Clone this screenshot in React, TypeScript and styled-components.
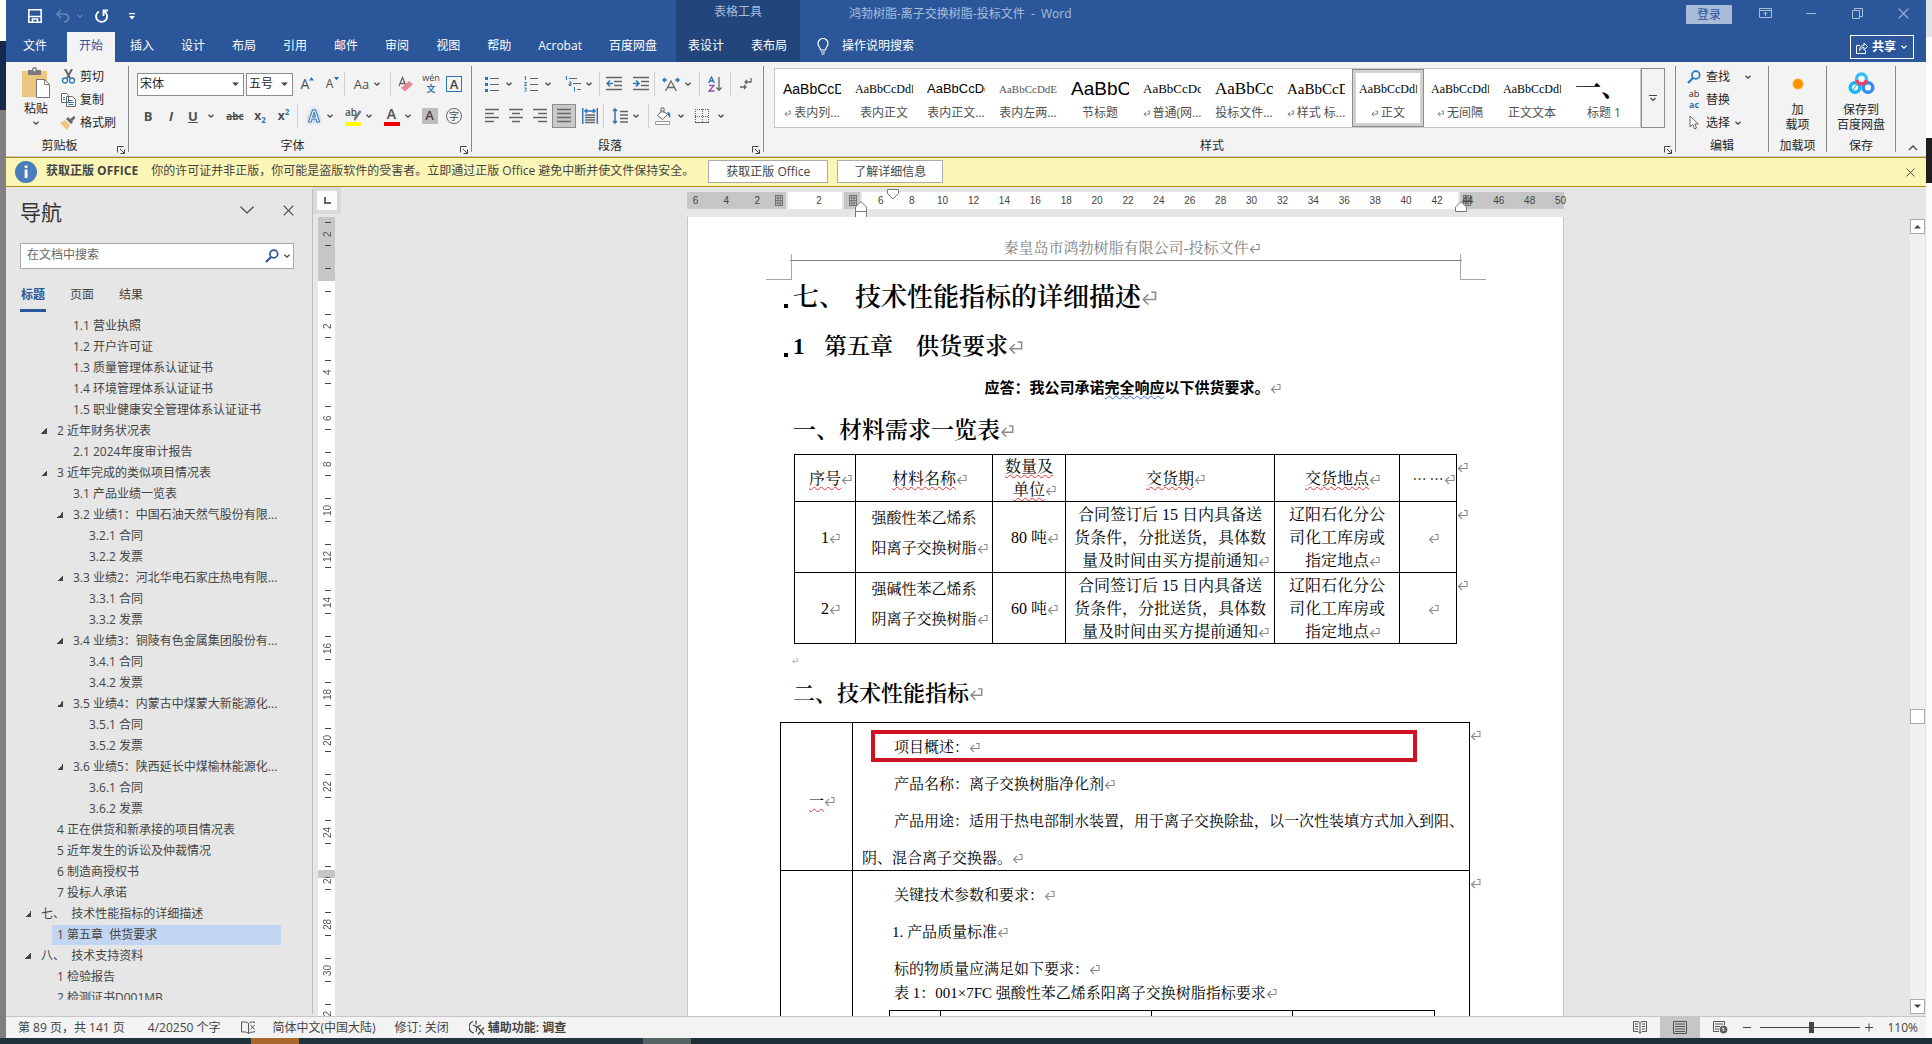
import React from 'react';
import styled, { createGlobalStyle, css } from 'styled-components';

const ui = `"Open Sans", "Noto Sans CJK SC", sans-serif`;
const song = `"Liberation Serif", "Noto Serif CJK SC", "Noto Sans CJK SC", serif`;
const arial = `"Liberation Sans", "Noto Sans CJK SC", sans-serif`;

const Global = createGlobalStyle`
  * { box-sizing: border-box; }
  body { margin: 0; font-family: ${ui}; font-size: 12px; line-height: 16px; color: #444; overflow: hidden; }
  button, input, select { font: inherit; color: inherit; margin: 0; }
  button { background: none; border: 0; padding: 0; cursor: pointer; white-space: nowrap; }
  svg { display: block; flex: none; }
  p, h1, h2, h3 { margin: 0; }
`;

/* ---------- frame ---------- */
const Desktop = styled.div`display: flex; flex-direction: column; height: 100vh; background: #fdfdfd;`;
const DesktopRow = styled.div`flex: 1; min-height: 0; display: flex;`;
const LeftStrip = styled.div`
  width: 6px; flex: none;
  background: linear-gradient(#fff 41px, #16294c 41px, #16294c 110px, #808080 110px);
`;
const RightStrip = styled.div`
  width: 6px; flex: none;
  background: linear-gradient(#dfe3ea 37px, #fdfdfd 37px, #fdfdfd 138px, #1e1e1e 138px, #1e1e1e 183px, #fbfbfb 183px);
`;
const Taskbar = styled.div`
  height: 6px; flex: none;
  background: linear-gradient(90deg, #22323a 251px, #a9682f 251px, #a9682f 299px, #22343c 299px, #22343c 643px, #566466 643px, #566466 691px, #1f2f38 691px);
`;
const Win = styled.div`flex: 1; min-width: 0; display: flex; flex-direction: column; background: #e6e6e6;`;

/* ---------- title area ---------- */
const Head = styled.header`display: flex; height: 62px; flex: none; background: #2b579a; color: #fff;`;
const HeadCol = styled.div<{ $grow?: boolean }>`
  display: flex; flex-direction: column;
  ${p => p.$grow && css`flex: 1; min-width: 0;`}
`;
const TitleRow = styled.div<{ $pad?: number }>`display: flex; align-items: center; height: 32px; padding-left: ${p => p.$pad ?? 0}px;`;
const TabRow = styled.nav<{ $pad?: number }>`display: flex; gap: 3px; height: 30px; padding: 0 ${p => p.$pad ?? 5}px;`;
const Tab = styled.button<{ $on?: boolean; $file?: boolean }>`
  height: 30px; padding: 0 12px 2px;
  ${p => p.$on && css`background: #f3f3f3; color: #2b579a;`}
  ${p => p.$file && css`margin-right: 5px;`}
`;
const QatButton = styled.button<{ $w: number }>`width: ${p => p.$w}px; height: 24px; display: flex; align-items: center; justify-content: center; gap: 6px;`;
const Context = styled.div`width: 124px; flex: none; margin-left: 2px; background: #22457c;`;
const ContextName = styled.div`height: 32px; padding: 4px 0; text-align: center; color: #a9bddb;`;
const DocTitle = styled.div`flex: 1; padding-bottom: 4px; color: #a9bddb; white-space: pre; overflow: hidden;`;
const SignIn = styled.button`width: 46px; height: 19px; margin: 0 10px 3px 0; border-radius: 1px; background: #a9bcd9; color: #2b579a;`;
const WinButton = styled.button`width: 46px; height: 26px; padding-bottom: 6px; display: flex; align-items: center; justify-content: center;`;
const Tell = styled.button`display: flex; align-items: center; gap: 13px; padding: 0 0 2px 9px;`;
const Share = styled.button`
  display: flex; align-items: center; justify-content: center; gap: 4px; width: 64px; height: 24px; margin: 3px 4px 0 auto;
  border: 1px solid #fff; font-weight: 600;
`;

/* ---------- ribbon ---------- */
const Ribbon = styled.div`display: flex; height: 95px; flex: none; background: #f3f3f3; border-bottom: 1px solid #c8c6c4; color: #262626;`;
const Group = styled.section<{ $w?: number }>`
  ${p => (p.$w ? css`width: ${p.$w}px; flex: none;` : css`flex: 1; min-width: 0;`)}
  display: flex; flex-direction: column; position: relative;
  &::after { content: ''; position: absolute; right: 0; top: 4px; bottom: 4px; width: 1px; background: #8a8a8a; }
`;
const GroupBody = styled.div<{ $pad: string; $col?: boolean }>`
  flex: 1; display: flex; padding: ${p => p.$pad};
  ${p => p.$col && css`flex-direction: column; gap: 10px;`}
`;
const Caption = styled.div`display: flex; align-items: center; height: 20px; padding-right: 1px;`;
const CaptionText = styled.span`flex: 1; text-align: center;`;
const Launcher = styled.button`width: 15px; height: 12px; display: flex; justify-content: center; align-items: end; align-self: end; padding-bottom: 2px;`;
const ToolRow = styled.div`display: flex; align-items: center; height: 22px; color: #444;`;
const Tool = styled.button<{ $w: number; $gap?: number; $on?: boolean }>`
  width: ${p => p.$w}px; height: 24px; flex: none; display: flex; align-items: center; justify-content: center; gap: ${p => p.$gap ?? 4}px;
  ${p => p.$on && css`background: #c8c8c8; border: 1px solid #8c8c8c;`}
`;
const Sep = styled.i`width: 1px; height: 24px; flex: none; background: #cfcfcf;`;
const Glyph = styled.span<{ $s?: number; $b?: boolean; $i?: boolean; $u?: boolean; $c?: string; $line?: boolean }>`
  font-size: ${p => p.$s ?? 14}px; line-height: 16px; min-width: 8px; text-align: center;
  font-weight: ${p => (p.$b ? 700 : 400)}; font-style: ${p => (p.$i ? 'italic' : 'normal')};
  text-decoration: ${p => (p.$u ? 'underline' : p.$line ? 'line-through' : 'none')}; color: ${p => p.$c ?? '#505050'};
  sub, sup { font-size: 8px; line-height: 8px; color: #2e75b5; }
`;
const Framed = styled.span<{ $kind: 'box' | 'fill' | 'circle' }>`
  width: 16px; height: 16px; font-size: ${p => (p.$kind === 'circle' ? 10 : 13)}px; line-height: 14px; text-align: center; color: #444; font-weight: 600;
  ${p => p.$kind === 'box' && css`border: 1px solid #2e75b5;`}
  ${p => p.$kind === 'fill' && css`background: #bdbdbd;`}
  ${p => p.$kind === 'circle' && css`border: 1px solid #666; border-radius: 50%; font-weight: 400;`}
`;
const GlowA = styled.span`width: 16px; font-size: 16px; line-height: 18px; font-weight: 700; text-align: center; color: #fff; -webkit-text-stroke: 1px #3b7ab8; filter: drop-shadow(0 0 2px #8fbce6);`;
const ColorMark = styled.span<{ $c: string }>`width: 16px; height: 20px; font-size: 14px; line-height: 15px; font-weight: 600; text-align: center; color: #505050; border-bottom: 4px solid ${p => p.$c};`;
const SmallAb = styled(ColorMark)`font-size: 10px; line-height: 12px; text-align: left; display: flex; svg { margin-left: -3px; }`;
const Pinyin = styled.span`display: flex; flex-direction: column; align-items: center; font-size: 9px; line-height: 10px; span { color: #2e75b5; font-size: 9px; line-height: 12px; font-weight: 700; }`;
const Combo = styled.span<{ $w: number }>`
  width: ${p => p.$w}px; height: 23px; margin-right: 2px; flex: none; display: flex; align-items: center; background: #fff; border: 1px solid #8d8d8d; padding-right: 4px;
  select { flex: 1; min-width: 0; appearance: none; border: 0; background: none; padding: 0 0 0 2px; color: #262626; outline: 0; }
`;
const Big = styled.button<{ $w: number }>`width: ${p => p.$w}px; display: flex; flex-direction: column; align-items: center; line-height: 15px; color: #262626; white-space: pre-line;`;
const BigIcon = styled.span<{ $h: number }>`height: ${p => p.$h}px; display: flex; align-items: center;`;
const List = styled.div`display: flex; flex-direction: column;`;
const ListTool = styled.button`height: 23px; display: flex; align-items: center; gap: 4px; color: #262626;`;
const ListIcon = styled.span`width: 16px; display: flex; justify-content: center;`;
const Far = styled.span`padding-left: 10px;`;

const Gallery = styled.div`flex: 1; min-width: 0; height: 60px; display: flex; background: #fff; border: 1px solid #c8c8c8; padding-left: 1px; overflow: hidden;`;
const StyleCard = styled.button<{ $on?: boolean }>`
  width: 72px; height: 58px; flex: none; display: flex; flex-direction: column; align-items: center; padding-top: 8px;
  ${p => p.$on && css`box-shadow: inset 0 0 0 1px #8c8c8c, inset 0 0 0 4px #d0d0cd;`}
`;
const Sample = styled.span<{ $f: string; $s: number; $c?: string; $b?: boolean }>`
  width: 58px; height: 26px; line-height: 24px; overflow: hidden; text-align: left;
  font-family: ${p => p.$f}; font-size: ${p => p.$s}px; color: ${p => p.$c ?? '#000'}; font-weight: ${p => (p.$b ? 700 : 400)};
`;
const StyleName = styled.span`display: flex; align-items: center; gap: 3px; margin-top: 2px; color: #505050; white-space: pre;`;
const More = styled.button`width: 24px; height: 60px; border: 1px solid #8c8c8c; display: flex; align-items: center; justify-content: center; flex: none;`;
const Collapse = styled.button`flex: none; width: 30px; display: flex; align-items: end; justify-content: center; padding: 0 0 4px 3px;`;

/* ---------- licence bar ---------- */
const Notice = styled.div`
  display: flex; align-items: center; height: 30px; flex: none; padding: 0 11px 0 9px; background: #fcf6b6; white-space: nowrap;
  border-top: 1px solid #b28b0a; border-bottom: 1px solid #b28b0a; color: #444;
`;
const NoticeTitle = styled.strong`margin: 0 13px 0 9px; padding-bottom: 2px;`;
const NoticeText = styled.span`padding-bottom: 2px; margin-right: 14px;`;
const NoticeButton = styled.button<{ $w: number }>`width: ${p => p.$w}px; height: 23px; margin: 0 9px 1px 0; background: #fff; border: 1px solid #ababab;`;
const Push = styled.span`flex: 1;`;

/* ---------- navigation ---------- */
const Body = styled.div`flex: 1; min-height: 0; display: flex;`;
const Nav = styled.aside`width: 307px; flex: none; display: flex; flex-direction: column; border-right: 1px solid #bdbdbd; margin: 2px 0; padding-bottom: 14px;`;
const NavHead = styled.div`display: flex; align-items: center; height: 54px; padding: 0 18px 12px 14px; gap: 29px; h2 { flex: 1; font-weight: 400; font-size: 21px; line-height: 28px; padding-top: 4px; color: #333; }`;
const SearchBox = styled.label`
  display: flex; align-items: center; gap: 4px; height: 26px; margin: 0 18px 0 14px; padding: 0 2px 0 6px; background: #fff; border: 1px solid #ababab;
  input { flex: 1; min-width: 0; border: 0; outline: 0; padding: 0 0 2px; background: none; } input::placeholder { color: #666; opacity: 1; }
`;
const NavTabs = styled.div`display: flex; gap: 23px; padding: 14px 14px 4px;`;
const NavTab = styled.button<{ $on?: boolean }>`
  width: 26px; height: 29px; padding-bottom: 5px; ${p => p.$on && css`color: #2b579a; font-weight: 700; border-bottom: 3px solid #2b579a; padding-bottom: 2px;`}
`;
const Tree = styled.div`flex: 1; min-height: 0; overflow: hidden; padding-right: 31px;`;
const Node = styled.a<{ $lvl: number; $on?: boolean }>`
  display: flex; align-items: center; gap: 10px; height: 20px; margin: 0 0 1px ${p => p.$lvl * 16 + 14}px;
  color: #444; text-decoration: none; white-space: pre; overflow: hidden;
  ${p => p.$on && css`background: linear-gradient(90deg, transparent 16px, #c2d5f2 16px);`}
`;
const Arrow = styled.span<{ $show?: boolean }>`width: 6px; height: 6px; flex: none; margin-left: 5px; ${p => p.$show && css`background: linear-gradient(135deg, transparent 50%, #444 50%);`}`;

/* ---------- rulers and page ---------- */
const RulerCol = styled.div`width: 28px; flex: none; display: flex; flex-direction: column; align-items: center;`;
const TabStop = styled.button`width: 28px; height: 27px; flex: none; margin-bottom: 3px; border: 4px solid #d9d9d9; background: #fbfbfb; display: flex; align-items: center; justify-content: center;`;
const VRuler = styled.div`
  width: 17px; flex: 1; min-height: 0; overflow: hidden; margin-right: 1px; color: #555; font: 10px/12px ${arial};
  background: linear-gradient(#c6c6c6 64px, #fff 64px);
`;
const VUnits = styled.div`margin-top: -6px;`;
const VUnit = styled.div<{ $cover?: boolean }>`
  height: 46px; display: flex; flex-direction: column; align-items: center; justify-content: space-between; padding: 11px 0;
  &::before, &::after { content: ''; width: 6px; height: 1px; background: #444; margin-left: 3px; }
  ${p => p.$cover && css`background: linear-gradient(transparent 15px, #c6c6c6 15px, #c6c6c6 23px, transparent 23px); span { clip-path: inset(0 0 6px 0); }`}
  span { writing-mode: vertical-rl; transform: rotate(180deg); height: 14px; text-align: center; margin-left: 2px; }
`;
const Canvas = styled.main`flex: 1; min-width: 0; display: flex; flex-direction: column; align-items: center; overflow: hidden;`;
const HRuler = styled.div`width: 877px; height: 30px; flex: none; display: grid; padding: 5px 0 9px; position: relative;`;
const Segments = styled.div`grid-area: 1 / 1; display: flex; gap: 2px;`;
const Seg = styled.i<{ $w?: number; $dark?: boolean }>`${p => (p.$w ? css`width: ${p.$w}px;` : css`flex: 1;`)} background: ${p => (p.$dark ? '#c6c6c6' : '#fff')}; display: flex; align-items: center; justify-content: ${p => (p.$w === 104 ? 'start' : 'end')}; padding: 0 3px;`;
const Numbers = styled.div`grid-area: 1 / 1; display: grid; grid-template-columns: repeat(29, 1fr); margin: 0 -12px 0 -7px; text-align: center; font: 10px/17px ${arial}; color: #444;`;
const Marker = styled.span<{ $x: number; $y: number }>`position: absolute; left: ${p => p.$x}px; top: ${p => p.$y}px;`;
const Page = styled.article`
  width: 877px; flex: 1; min-height: 0; overflow: hidden; position: relative; background: #fff; border: solid #c6c6c6; border-width: 0 1px;
  padding: 20px 101px 0 102px; color: #000; font-family: ${song}; font-size: 15px;
`;
const PageHeader = styled.div`text-align: center; line-height: 23px; border-bottom: 1px solid #808080; color: #7f7f7f;`;
const Corner = styled.i<{ $right?: boolean }>`
  position: absolute; top: 37px; width: 26px; height: 26px; border-bottom: 1px solid #a6a6a6;
  ${p => (p.$right ? css`right: 77px; border-left: 1px solid #a6a6a6;` : css`left: 78px; border-right: 1px solid #a6a6a6;`)}
`;
const Heading = styled.h2<{ $s: number; $top: number }>`
  display: flex; align-items: center; font-size: ${p => p.$s}px; line-height: 40px; margin-top: ${p => p.$top}px; padding-left: 3px; font-weight: 600; white-space: pre;
`;
const Dot = styled.i`width: 4px; height: 4px; background: #000; margin: 15px 5px 0 -9px;`;
const HeadNum = styled.span<{ $w: number }>`width: ${p => p.$w}px;`;
const Answer = styled.p`line-height: 24px; margin-top: 9px; padding-left: 2px; text-align: center; font-family: ${arial}; font-weight: 700;`;
const Wave = styled.span<{ $c?: string }>`text-decoration: underline wavy ${p => p.$c ?? '#e33'} 1px; text-underline-offset: 2px; text-decoration-skip-ink: none;`;
const Mark = styled.svg<{ $s: number }>`display: inline-block; vertical-align: -1px; margin-right: -${p => p.$s}px;`;
const NameMark = styled.svg``;
const ReqTable = styled.table`
  margin: 3px 0 0 4px; width: 682px; table-layout: fixed; border-collapse: collapse; font-size: 16px; line-height: 23px;
  th, td { border: 1px solid #000; padding: 0; text-align: center; font-weight: 400; white-space: nowrap; }
  tr { height: 71px; } thead tr { height: 47px; }
`;
const NameCell = styled.td`font-size: 15px; line-height: 30px; && { padding-bottom: 9px; }`;
const Dots = styled.th`font-family: "Noto Sans CJK SC", sans-serif; font-size: 14px;`;
const RowEnd = styled.td`&&& { border: 0; text-align: left; vertical-align: top; padding: 0; }`;
const Blank = styled.p`height: 12px; margin: 11px 0 0 2px; display: flex; align-items: center;`;
const SpecTable = styled.table`
  margin: 8px 0 0 -10px; width: 709px; table-layout: fixed; border-collapse: collapse; line-height: 24px;
  > tbody > tr > td { border: 1px solid #000; padding: 0; text-align: center; position: relative; }
`;
const SpecIndex = styled.td`&& { padding-top: 8px; }`;
const SpecBody = styled.td`&& { text-align: left; vertical-align: top; padding: 12px 0 0 8px; white-space: nowrap; }`;
const Line = styled.p<{ $in?: number; $tight?: boolean }>`padding-left: ${p => p.$in ?? 33}px; margin-bottom: ${p => (p.$tight ? 0 : 13)}px; &:last-child { margin-bottom: 0; }`;
const RedBox = styled.span`position: absolute; left: 18px; top: 7px; width: 546px; height: 32px; border: 4px solid #d01224;`;
const Inner = styled.table`
  margin: 5px 0 0 28px; width: 545px; table-layout: fixed; border-collapse: collapse;
  th { border: 1px solid #000; padding: 0; font-weight: 400; height: 26px; }
`;
const ScrollBar = styled.div`width: 16px; flex: none; margin: 32px 0 2px; display: flex; flex-direction: column; background: #f0f0f0; border-right: 1px solid #e2e2e2;`;
const ScrollButton = styled.button`width: 15px; height: 15px; flex: none; background: #fff; border: 1px solid #ababab; display: flex; align-items: center; justify-content: center;`;
const ScrollGap = styled.span<{ $n: number }>`flex: ${p => p.$n};`;

/* ---------- status bar ---------- */
const Status = styled.footer`display: flex; align-items: center; height: 22px; flex: none; padding: 0 8px 0 12px; background: #f3f3f3; border-top: 1px solid #c6c6c6; white-space: nowrap;`;
const StatusItem = styled.button<{ $gap: number; $b?: boolean }>`margin-right: ${p => p.$gap}px; display: flex; align-items: center; gap: 3px; font-weight: ${p => (p.$b ? 600 : 400)};`;
const ViewButton = styled.button<{ $on?: boolean }>`width: 40px; height: 21px; display: flex; align-items: center; justify-content: center; background: ${p => (p.$on ? '#c6c6c6' : 'none')};`;
const Zoom = styled.input`
  appearance: none; width: 100px; height: 14px; background: linear-gradient(#444, #444) center / 100% 1px no-repeat;
  && { margin: 0 5px; }
  &::-webkit-slider-thumb { appearance: none; width: 5px; height: 11px; background: #444; }
`;
const Percent = styled.span`width: 45px; text-align: right;`;

/* ---------- drawings ---------- */
const Chev = ({ c = '#444', w = 8, sw = 1.3 }: { c?: string; w?: number; sw?: number }) => (
  <svg width={w} height={w} viewBox="0 0 8 8" fill="none" stroke={c} strokeWidth={sw}><path d="M1.5 2.8 4 5.2 6.500 2.8" /></svg>
);
const Tri = ({ up }: { up?: boolean }) => (
  <svg width="7" height="5" viewBox="0 0 7 5"><path d={up ? 'M0 4.5 3.5 1 7 4.5Z' : 'M0 .5 3.5 4 7 .5Z'} fill="#444" /></svg>
);
const Ret = ({ s = 11, c = '#8c8c8c', flow }: { s?: number; c?: string; flow?: boolean }) => {
  const Svg = flow ? NameMark : Mark;
  return <Svg $s={s} width={s} height={s} viewBox="0 0 11 11" fill="none" stroke={c} strokeWidth="1.1"><path d="M7 1.5h3v5H1.5M5 3 1.5 6.5 5 10" /></Svg>;
};
const Lens = ({ c = '#2e75b5', s = 14 }: { c?: string; s?: number }) => (
  <svg width={s} height={s} viewBox="0 0 14 14" fill="none" stroke={c}><circle cx="8.8" cy="5" r="3.9" strokeWidth="1.7" /><path d="M6 8 1 13" strokeWidth="2.2" /></svg>
);
const X = ({ s = 11, c = '#444' }: { s?: number; c?: string }) => (
  <svg width={s} height={s} viewBox="0 0 11 11" stroke={c} strokeWidth="1.1"><path d="M.7.7l9.6 9.6M10.3.7.7 10.3" /></svg>
);
const Ico = ({ d, b, w = 16, h = 16 }: { d: string; b?: string; w?: number; h?: number }) => (
  <svg width={w} height={h} viewBox={`0 0 ${w} ${h}`} fill="none" strokeWidth="1.3"><path d={d} stroke="#666" />{b && <path d={b} stroke="#2e75b5" strokeWidth="1.5" />}</svg>
);
const LaunchIcon = () => <svg width="8" height="8" viewBox="0 0 8 8" fill="none" stroke="#444"><path d="M.5 6.5v-6h6M3 3l4 4M7.5 3.5v4h-4" /></svg>;
const GridMark = () => <svg width="8" height="11" viewBox="0 0 8 11" stroke="#666" fill="none"><path d="M.5 0v11M2.8 0v11M5.2 0v11M7.5 0v11M0 .5h8M0 3h8M0 5.5h8M0 8h8M0 10.5h8" strokeWidth=".8" /></svg>;
const PasteIcon = () => (
  <svg width="30" height="32" viewBox="0 0 30 32"><path d="M1 4h25v26H1z" fill="#ecc57f" /><path d="M7 3h4c0-4 5-4 5 0h4v5H7z" fill="#7a7a7a" /><circle cx="13.5" cy="3" r="1.2" fill="#f3f3f3" /><path d="M15.5 12.5h8l5 5v13h-13z" fill="#fff" stroke="#777" /><path d="M23.5 12.5v5h5" fill="none" stroke="#777" /></svg>
);
const CutIcon = () => <svg width="15" height="15" viewBox="0 0 15 15" fill="none"><path d="M4 0l5 9M11 0 6 9" stroke="#666" strokeWidth="2" /><circle cx="4" cy="11.5" r="2.5" stroke="#2e75b5" strokeWidth="1.3" /><circle cx="11" cy="11.5" r="2.5" stroke="#2e75b5" strokeWidth="1.3" /></svg>;
const CopyIcon = () => <svg width="15" height="15" viewBox="0 0 15 15" fill="#fff" stroke="#666"><path d="M.5 1.5h5l2 2v7h-7zM5.500 4.5h6l3 3v7h-9z" /><path d="M7.5 8.5h4M7.5 10.5h5M7.5 12.5h5M2 5.5h2M2 7.5h2" stroke="#2e75b5" /></svg>;
const BrushIcon = () => <svg width="16" height="15" viewBox="0 0 16 15"><path d="M0 8l5-3 5 5-3 5z" fill="#ecc57f" /><path d="M6 4l2-2 5 5-2 2z" fill="#666" /><path d="M10 4l4-3 1.5 1.5-3.500 4z" fill="#666" /></svg>;
const BulletIcon = () => <svg width="14" height="16" viewBox="0 0 14 16"><path d="M5 2.5h9M5 8.5h9M5 14.5h9" stroke="#666" strokeWidth="1.2" /><path d="M0 1h3v3H0zM0 7h3v3H0zM0 13h3v3H0z" fill="#2e75b5" /></svg>;
const NumIcon = () => <svg width="14" height="16" viewBox="0 0 14 16" fill="none"><path d="M6 2.5h8M6 8.5h8M6 14.5h8" stroke="#666" strokeWidth="1.2" /><path d="M.5 1l1-.5V4M.5 6.5h2L.5 9.5h2.5M.5 12h2l-1 1.5 1 1-2 1" stroke="#2e75b5" /></svg>;
const MultiIcon = () => <svg width="16" height="16" viewBox="0 0 16 16" fill="none"><path d="M4 2.5h8M8 7.5h8M12 13.5h4" stroke="#666" strokeWidth="1.2" /><path d="M.5 1l1-.5V4M4 6h2v3.5H4V8h2M9.5 11v4.5" stroke="#2e75b5" /></svg>;
const BaiduIcon = () => (
  <svg width="27" height="23" viewBox="0 0 27 23" fill="none" strokeWidth="3.4"><circle cx="7" cy="15.5" r="4.8" stroke="#18b4f5" /><circle cx="20" cy="15.5" r="4.8" stroke="#2c8df4" /><circle cx="13.5" cy="7" r="5" stroke="#35c1ee" /><path d="M8.6 8a5 5 0 0 0 9.800 0" stroke="#ee4360" /><path d="M10 10.500 5 18" stroke="#18b4f5" strokeWidth="1" /></svg>
);
const lines = (xs: [number, number][]) => xs.map(([a, b], i) => `M${a} ${i * 4 + 1.5}H${b}`).join('');

const styleList: [string, string, string, number, boolean?, string?][] = [
  ['AaBbCcDd', '表内列...', arial, 14, true], ['AaBbCcDdEe', '表内正文', song, 12], ['AaBbCcDdE', '表内正文...', arial, 13],
  ['AaBbCcDdEe', '表内左两...', song, 11, false, '#555'], ['AaBbCc', '节标题', arial, 19], ['AaBbCcDdE', '普通(网...', song, 13, true],
  ['AaBbCc', '投标文件...', song, 17], ['AaBbCcDd', '样式 标...', song, 15, true], ['AaBbCcDdEe', '正文', song, 12, true],
  ['AaBbCcDdEe', '无间隔', song, 12, true], ['AaBbCcDdEe', '正文文本', song, 12], ['一、', '标题 1', song, 26],
];

const tree: [number, string, boolean?, boolean?][] = [
  [2, '1.1 营业执照'], [2, '1.2 开户许可证'], [2, '1.3 质量管理体系认证证书'], [2, '1.4 环境管理体系认证证书'], [2, '1.5 职业健康安全管理体系认证证书'],
  [1, '2 近年财务状况表', true], [2, '2.1 2024年度审计报告'], [1, '3 近年完成的类似项目情况表', true], [2, '3.1 产品业绩一览表'],
  [2, '3.2 业绩1：中国石油天然气股份有限...', true], [3, '3.2.1 合同'], [3, '3.2.2 发票'],
  [2, '3.3 业绩2：河北华电石家庄热电有限...', true], [3, '3.3.1 合同'], [3, '3.3.2 发票'],
  [2, '3.4 业绩3：铜陵有色金属集团股份有...', true], [3, '3.4.1 合同'], [3, '3.4.2 发票'],
  [2, '3.5 业绩4：内蒙古中煤蒙大新能源化...', true], [3, '3.5.1 合同'], [3, '3.5.2 发票'],
  [2, '3.6 业绩5：陕西延长中煤榆林能源化...', true], [3, '3.6.1 合同'], [3, '3.6.2 发票'],
  [1, '4 正在供货和新承接的项目情况表'], [1, '5 近年发生的诉讼及仲裁情况'], [1, '6 制造商授权书'], [1, '7 投标人承诺'],
  [0, '七、  技术性能指标的详细描述', true], [1, '1 第五章  供货要求', false, true], [0, '八、  技术支持资料', true], [1, '1 检验报告'], [1, '2 检测证书D001MB'],
];

const requirements = [['1', '强酸性苯乙烯系', '阳离子交换树脂', '80 吨'], ['2', '强碱性苯乙烯系', '阴离子交换树脂', '60 吨']];

const Cap = ({ children, launch }: { children: string; launch?: boolean }) => (
  <Caption><CaptionText>{children}</CaptionText>{launch && <Launcher aria-label={children + '设置'}><LaunchIcon /></Launcher>}</Caption>
);

const TitleBar = () => (
  <Head>
    <HeadCol>
      <TitleRow $pad={15}>
        <QatButton $w={28} aria-label="保存"><svg width="14" height="14" viewBox="0 0 14 14" fill="none" stroke="#fff" strokeWidth="1.6"><path d="M.8.8h12.4v12.400H.8zM1 7.500h12M4.500 13v-3h5v3" /></svg></QatButton>
        <QatButton $w={42} aria-label="撤消"><svg width="14" height="14" viewBox="0 0 14 14" fill="none" stroke="#6688bb" strokeWidth="1.7"><path d="M5 1 1 5l4 4M1 5h7c6 0 6 7 0 8" /></svg><Chev c="#6688bb" /></QatButton>
        <QatButton $w={22} aria-label="恢复"><svg width="14" height="14" viewBox="0 0 14 14" fill="none" stroke="#fff" strokeWidth="1.9"><path d="M4 2.5a5.500 5.500 0 1 0 5.500.2M8.500 7V1.500H13" /></svg></QatButton>
        <QatButton $w={38} aria-label="自定义"><svg width="6" height="7" viewBox="0 0 6 7"><path d="M0 0h6v1.3H0zM0 3h6L3 6.500z" fill="#fff" /></svg></QatButton>
      </TitleRow>
      <TabRow>
        {['文件', '开始', '插入', '设计', '布局', '引用', '邮件', '审阅', '视图', '帮助', 'Acrobat', '百度网盘'].map(t => <Tab key={t} $on={t === '开始'} $file={t === '文件'}>{t}</Tab>)}
      </TabRow>
    </HeadCol>
    <Context>
      <ContextName>表格工具</ContextName>
      <TabRow $pad={0}><Tab>表设计</Tab><Tab>表布局</Tab></TabRow>
    </Context>
    <HeadCol $grow>
      <TitleRow $pad={49}>
        <DocTitle>鸿勃树脂-离子交换树脂-投标文件  -  Word</DocTitle>
        <SignIn>登录</SignIn>
        <WinButton aria-label="功能区显示选项"><svg width="13" height="10" viewBox="0 0 13 10" fill="none" stroke="#a9bddb"><path d="M.5.5h12v9H.5zM.5 2.5h12M6.500 8V4M4.500 6l2-2 2 2" /></svg></WinButton>
        <WinButton aria-label="最小化"><svg width="10" height="10" viewBox="0 0 10 10" stroke="#a9bddb"><path d="M0 5.5h10" /></svg></WinButton>
        <WinButton aria-label="还原"><svg width="11" height="11" viewBox="0 0 11 11" fill="none" stroke="#a9bddb"><path d="M.5 2.5h7v8h-7zM2.500 2V.5h8v8H8" /></svg></WinButton>
        <WinButton aria-label="关闭"><X c="#a9bddb" /></WinButton>
      </TitleRow>
      <TabRow $pad={8}>
        <Tell><svg width="12" height="17" viewBox="0 0 12 17" fill="none" stroke="#fff" strokeWidth="1.2"><path d="M3.5 12c0-3-2.500-3-2.500-6.500a5 5 0 0 1 10 0C11 9 8.500 9 8.500 12zM4 14h4M4.500 16h3" /></svg>操作说明搜索</Tell>
        <Share><svg width="12" height="13" viewBox="0 0 12 13" fill="none" stroke="#fff"><path d="M4 4.5H.5v8h9V9M3.500 9.500C3.500 6 5 4.500 8 4.500V2l3.500 3.500L8 9V6.500c-2 0-3.500 1-4.500 3z" /></svg>共享<Chev c="#fff" /></Share>
      </TabRow>
    </HeadCol>
  </Head>
);

const RibbonBar = () => (
  <Ribbon>
    <Group $w={123}>
      <GroupBody $pad="3px 0 0 6px">
        <Big $w={48}><BigIcon $h={36}><PasteIcon /></BigIcon>粘贴<BigIcon $h={14}><Chev /></BigIcon></Big>
        <List>
          <ListTool><ListIcon><CutIcon /></ListIcon>剪切</ListTool>
          <ListTool><ListIcon><CopyIcon /></ListIcon>复制</ListTool>
          <ListTool><ListIcon><BrushIcon /></ListIcon>格式刷</ListTool>
        </List>
      </GroupBody>
      <Cap launch>剪贴板</Cap>
    </Group>
    <Group $w={343}>
      <GroupBody $pad="11px 0 0 8px" $col>
        <ToolRow>
          <Combo $w={107}><select aria-label="字体"><option>宋体</option></select><Tri /></Combo>
          <Combo $w={47}><select aria-label="字号"><option>五号</option></select><Tri /></Combo>
          <Tool $w={25} $gap={0} aria-label="增大字号"><Glyph $s={14}>A</Glyph><svg width="5" height="14" viewBox="0 0 5 14"><path d="M0 3.5 2.500 0 5 3.500z" fill="#2e75b5" /></svg></Tool>
          <Tool $w={24} $gap={0} aria-label="减小字号"><Glyph $s={12}>A</Glyph><svg width="5" height="14" viewBox="0 0 5 14"><path d="M0 0 2.5 3.500 5 0z" fill="#2e75b5" /></svg></Tool>
          <Sep /><Tool $w={45} aria-label="更改大小写"><Glyph $s={13}>Aa</Glyph><Chev /></Tool>
          <Sep /><Tool $w={30} aria-label="清除格式"><svg width="16" height="16" viewBox="0 0 16 16"><path d="M1 10 4.5 1.500 8 10M2.500 7.500h4" fill="none" stroke="#666" strokeWidth="1.3" /><path d="M3 12l8-7 4 3.5-8 7z" fill="#e8899a" /></svg></Tool>
          <Tool $w={20} aria-label="拼音指南"><Pinyin>wén<span>文</span></Pinyin></Tool>
          <Tool $w={26} aria-label="字符边框"><Framed $kind="box">A</Framed></Tool>
        </ToolRow>
        <ToolRow>
          <Tool $w={22}><Glyph $s={13} $b>B</Glyph></Tool>
          <Tool $w={24}><Glyph $s={13} $b $i>I</Glyph></Tool>
          <Tool $w={37} $gap={9}><Glyph $s={13} $b $u>U</Glyph><Chev /></Tool>
          <Tool $w={30}><Glyph $s={10} $b $line>abc</Glyph></Tool>
          <Tool $w={20}><Glyph $s={12} $b>x<sub>2</sub></Glyph></Tool>
          <Tool $w={27}><Glyph $s={12} $b>x<sup>2</sup></Glyph></Tool>
          <Sep /><Tool $w={44}><GlowA>A</GlowA><Chev /></Tool>
          <Tool $w={34}><SmallAb $c="#ffff00">ab<svg width="8" height="15" viewBox="0 0 8 15"><path d="M0 14 6.500 5" stroke="#777" strokeWidth="2.5" /></svg></SmallAb><Chev /></Tool>
          <Tool $w={43}><ColorMark $c="#f00000">A</ColorMark><Chev /></Tool>
          <Tool $w={21}><Framed $kind="fill">A</Framed></Tool>
          <Tool $w={28}><Framed $kind="circle">字</Framed></Tool>
        </ToolRow>
      </GroupBody>
      <Cap launch>字体</Cap>
    </Group>
    <Group $w={292}>
      <GroupBody $pad="11px 0 0 7px" $col>
        <ToolRow>
          <Tool $w={39} $gap={6} aria-label="项目符号"><BulletIcon /><Chev /></Tool>
          <Tool $w={40} $gap={6} aria-label="编号"><NumIcon /><Chev /></Tool>
          <Tool $w={41} aria-label="多级列表"><MultiIcon /><Chev /></Tool>
          <Sep /><Tool $w={27} aria-label="减少缩进"><Ico d="M0 1.5h16M8 5.5h8M8 9.5h8M0 13.5h16" b="M7 7.5H1M4 4.5l-3 3 3 3" /></Tool>
          <Tool $w={27} aria-label="增加缩进"><Ico d="M0 1.5h16M8 5.5h8M8 9.5h8M0 13.5h16" b="M0 7.5h6M3 4.5l3 3-3 3" /></Tool>
          <Sep /><Tool $w={44} aria-label="中文版式"><Ico w={18} d="M3.5 15 9 5l5.500 10M5.500 11.500h7" b="M5 4H1M3 2 1 4l2 2M13 4h4M15 2l2 2-2 2" /><Chev /></Tool>
          <Sep /><Tool $w={30} aria-label="排序"><svg width="15" height="16" viewBox="0 0 15 16" fill="none" strokeWidth="1.3"><path d="M.7 7 3.5 1l2.800 6M1.700 5h3.600" stroke="#2e75b5" /><path d="M1 9.5h5L1 15h5.500" stroke="#8e4fb0" /><path d="M11 1v13M8.5 11.500 11 14.300l2.500-2.800" stroke="#666" /></svg></Tool>
          <Sep /><Tool $w={30} aria-label="显示标记"><Ico w={12} h={14} d="M11 1v4H5M7 3 5 5l2 2M0 10h6M4 8l2 2-2 2" /></Tool>
        </ToolRow>
        <ToolRow>
          <Tool $w={25} aria-label="左对齐"><Ico w={14} d={lines([[0, 14], [0, 9], [0, 14], [0, 9]])} /></Tool>
          <Tool $w={24} aria-label="居中"><Ico w={14} d={lines([[0, 14], [3, 11], [0, 14], [3, 11]])} /></Tool>
          <Tool $w={24} aria-label="右对齐"><Ico w={14} d={lines([[0, 14], [5, 14], [0, 14], [5, 14]])} /></Tool>
          <Tool $w={24} $on aria-label="两端对齐"><Ico w={14} d={lines([[0, 14], [0, 14], [0, 14], [0, 14]])} /></Tool>
          <Tool $w={27} aria-label="分散对齐"><Ico d="M3 7h10M3 9.5h10M3 12h10M3 14.5h10" b="M.7 0v16M15.3 0v16M3 3h10M5 1 3 3l2 2M11 1l2 2-2 2" /></Tool>
          <Sep /><Tool $w={44} aria-label="行距"><Ico d="M8 3.5h8M8 7h8M8 10.5h8M8 14h8" b="M3 1v14M1 3l2-2 2 2M1 13l2 2 2-2" /><Chev /></Tool>
          <Sep /><Tool $w={42} $gap={5} aria-label="底纹"><svg width="17" height="18" viewBox="0 0 17 18" fill="none"><path d="M7 3.5 2.500 8.500l5 4 5-5zM6 6V1h3v5" stroke="#666" fill="#fff" /><path d="M12 5c3 0 4 3 3 6l-2-3" fill="#2e75b5" /><path d="M.5 14.5h14v3H.5z" stroke="#999" fill="#fff" /></svg><Chev /></Tool>
          <Tool $w={38} $gap={8} aria-label="边框"><svg width="14" height="14" viewBox="0 0 14 14" fill="none" stroke="#666" strokeDasharray="1 1"><path d="M.5 0v14M4.500 0M7.500 0v14M13.500 0v14M0 .5h14M0 7.500h14" /><path d="M0 13.500h14" strokeDasharray="none" /></svg><Chev /></Tool>
        </ToolRow>
      </GroupBody>
      <Cap launch>段落</Cap>
    </Group>
    <Group>
      <GroupBody $pad="6px 11px 0 10px">
        <Gallery>
          {styleList.map(([s, n, f, z, m, c], i) => (
            <StyleCard key={i} $on={i === 8}><Sample $f={f} $s={z} $c={c} $b={i === 11}>{s}</Sample><StyleName>{m && <Ret s={7} c="#555" flow />}{n}</StyleName></StyleCard>
          ))}
        </Gallery>
        <More aria-label="其他样式"><svg width="8" height="7" viewBox="0 0 8 7" fill="none" stroke="#444"><path d="M0 .5h8M1.500 3 4 5.500 6.500 3" strokeWidth="1.2" /></svg></More>
      </GroupBody>
      <Cap launch>样式</Cap>
    </Group>
    <Group $w={93}>
      <GroupBody $pad="3px 0 0 10px">
        <List>
          <ListTool><ListIcon><Lens /></ListIcon>查找<Far><Chev /></Far></ListTool>
          <ListTool><ListIcon><Pinyin>ab<span>ac</span></Pinyin></ListIcon>替换</ListTool>
          <ListTool><ListIcon><svg width="10" height="15" viewBox="0 0 10 15" fill="#fff" stroke="#666"><path d="M1 1v11l2.7-2.500L5.500 14l2-1-1.800-4H9.300z" /></svg></ListIcon>选择<Chev /></ListTool>
        </List>
      </GroupBody>
      <Cap>编辑</Cap>
    </Group>
    <Group $w={58}>
      <GroupBody $pad="3px 0 0"><Big $w={57}><BigIcon $h={37}><svg width="16" height="16" viewBox="0 0 16 16"><circle cx="8" cy="8" r="6" fill="#fbd9a5" /><circle cx="8" cy="8" r="5" fill="#fc9406" /></svg></BigIcon>{'加\n载项'}</Big></GroupBody>
      <Cap>加载项</Cap>
    </Group>
    <Group $w={69}>
      <GroupBody $pad="3px 0 0"><Big $w={68}><BigIcon $h={37}><BaiduIcon /></BigIcon>{'保存到\n百度网盘'}</Big></GroupBody>
      <Cap>保存</Cap>
    </Group>
    <Collapse aria-label="折叠功能区"><svg width="10" height="8" viewBox="0 0 10 8" fill="none" stroke="#444" strokeWidth="1.3"><path d="M1 6l4-4 4 4" /></svg></Collapse>
  </Ribbon>
);

const Navigation = () => (
  <Nav>
    <NavHead><h2>导航</h2>
      <button aria-label="任务窗格选项"><svg width="14" height="8" viewBox="0 0 14 8" fill="none" stroke="#444" strokeWidth="1.2"><path d="M.5.7 7 7 13.500.7" /></svg></button>
      <button aria-label="关闭"><X /></button>
    </NavHead>
    <SearchBox><input placeholder="在文档中搜索" aria-label="在文档中搜索" /><Lens c="#2b579a" /><Chev /></SearchBox>
    <NavTabs><NavTab $on>标题</NavTab><NavTab>页面</NavTab><NavTab>结果</NavTab></NavTabs>
    <Tree>{tree.map(([l, t, open, on], i) => <Node key={i} href="#" $lvl={l} $on={on}><Arrow $show={open} />{t}</Node>)}</Tree>
  </Nav>
);

const Ruler = () => (
  <HRuler>
    <Segments><Seg $w={99} $dark><GridMark /></Seg><Seg $w={54} /><Seg $w={16} $dark><GridMark /></Seg><Seg /><Seg $w={104} $dark><GridMark /></Seg></Segments>
    <Numbers>{Array.from({ length: 29 }, (_, i) => Math.abs(i * 2 - 6)).map((n, i) => <span key={i}>{i === 3 || i === 5 ? '' : n}</span>)}</Numbers>
    <Marker $x={200} $y={2}><svg width="12" height="11" viewBox="0 0 12 11" fill="#fff" stroke="#777"><path d="M.5.5h11v4L6 10 .5 4.500z" /></svg></Marker>
    <Marker $x={168} $y={14}><svg width="12" height="17" viewBox="0 0 12 17" fill="#fff" stroke="#777"><path d="M.5 10.5V6L6 .7 11.500 6v4.500zM.5 10.500h11v6H.5z" /></svg></Marker>
    <Marker $x={768} $y={14}><svg width="12" height="11" viewBox="0 0 12 11" fill="#fff" stroke="#777"><path d="M.5 10.5V6L6 .7 11.500 6v4.500z" /></svg></Marker>
  </HRuler>
);

const Document = () => (
  <Page>
    <Corner /><Corner $right />
    <PageHeader>秦皇岛市鸿勃树脂有限公司-投标文件<Ret /></PageHeader>
    <Heading as="h1" $s={26} $top={17}><Dot /><HeadNum $w={62}>七、</HeadNum>技术性能指标的详细描述<Ret s={16} /></Heading>
    <Heading $s={23} $top={9}><Dot /><HeadNum $w={31}>1</HeadNum>第五章　供货要求<Ret s={15} /></Heading>
    <Answer>应答：我公司承诺<Wave $c="#3a6fe0">完全响应</Wave>以下供货要求。<Ret /></Answer>
    <Heading as="h3" $s={23} $top={11}>一、材料需求一览表<Ret s={14} /></Heading>
    <ReqTable>
      <colgroup><col width="61" /><col width="137" /><col width="73" /><col width="209" /><col width="125" /><col width="57" /><col width="20" /></colgroup>
      <thead><tr>
        <th><Wave>序号</Wave><Ret /></th><th><Wave>材料名称</Wave><Ret /></th><th><Wave>数量及</Wave><br /><Wave>单位</Wave><Ret /></th>
        <th><Wave>交货期</Wave><Ret /></th><th><Wave>交货地点</Wave><Ret /></th><Dots>… …<Ret /></Dots><RowEnd><Ret /></RowEnd>
      </tr></thead>
      <tbody>{requirements.map(([n, a, b, q]) => (
        <tr key={n}>
          <td>{n}<Ret /></td><NameCell>{a}<br />{b}<Ret /></NameCell><td>{q}<Ret /></td>
          <td>合同签订后 15 日内具备送<br />货条件，分批送货，具体数<br />量及时间由买方提前通知<Ret /></td>
          <td>辽阳石化分公<br />司化工库房或<br />指定地点<Ret /></td><td><Ret /></td><RowEnd><Ret /></RowEnd>
        </tr>
      ))}</tbody>
    </ReqTable>
    <Blank><Ret s={6} /></Blank>
    <Heading as="h3" $s={22} $top={7}>二、技术性能指标<Ret s={14} /></Heading>
    <SpecTable>
      <colgroup><col width="72" /><col width="617" /><col width="20" /></colgroup>
      <tbody>
        <tr>
          <SpecIndex><Wave>一</Wave><Ret /></SpecIndex>
          <SpecBody>
            <RedBox />
            <Line>项目概述：<Ret /></Line>
            <Line>产品名称：离子交换树脂净化剂<Ret /></Line>
            <Line>产品用途：适用于热电部制水装置，用于离子交换除盐，以一次性装填方式加入到阳、</Line>
            <Line $in={1}>阴、混合离子交换器。<Ret /></Line>
          </SpecBody>
          <RowEnd><Ret /></RowEnd>
        </tr>
        <tr>
          <td />
          <SpecBody>
            <Line>关键技术参数和要求：<Ret /></Line>
            <Line $in={31}>1. 产品质量标准<Ret /></Line>
            <Line $tight>标的物质量应满足如下要求：<Ret /></Line>
            <Line $tight>表 1：001×7FC 强酸性苯乙烯系阳离子交换树脂指标要求<Ret /></Line>
            <Inner>
              <colgroup><col width="51" /><col width="211" /><col width="141" /><col width="142" /></colgroup>
              <thead><tr><th>序号</th><th>项目</th><th>质量指标</th><th>试验方法</th></tr></thead>
            </Inner>
          </SpecBody>
          <RowEnd><Ret /></RowEnd>
        </tr>
      </tbody>
    </SpecTable>
  </Page>
);

const StatusBar = () => (
  <Status>
    <StatusItem $gap={23}>第 89 页，共 141 页</StatusItem>
    <StatusItem $gap={21}>4/20250 个字</StatusItem>
    <StatusItem $gap={16} aria-label="校对"><svg width="15" height="13" viewBox="0 0 15 13" fill="none" stroke="#555"><path d="M7.5 2.500C6 .8 3 .8.500 1v10c2.500-.3 5.500 0 7 1.500zM7.500 2.500C8.500 1.200 11 .8 13.500 1v1M7.500 12.500c1.500-1.200 3-1.500 6-1.500v-1M9.500 4l4 4.500M13.500 4l-4 4.500" /></svg></StatusItem>
    <StatusItem $gap={19}>简体中文(中国大陆)</StatusItem>
    <StatusItem $gap={20}>修订: 关闭</StatusItem>
    <StatusItem $gap={0} $b><svg width="16" height="15" viewBox="0 0 16 15" fill="none" stroke="#444" strokeWidth="1.2"><path d="M4 1.5A6 6 0 0 0 5 13M7 .5v4M4 5l4 2 4-2M8 7l-1 5M9 7.500l6 7M15 7.500l-6 7" /></svg>辅助功能: 调查</StatusItem>
    <Push />
    <ViewButton aria-label="阅读视图"><svg width="14" height="13" viewBox="0 0 14 13" fill="none" stroke="#555"><path d="M7 2 5 .5H.5v10H5l2 2 2-2h4.500V.5H9zM7 2v10M2 3h3M2 5.500h3M2 8h3M9 3h3M9 5.500h3M9 8h3" /></svg></ViewButton>
    <ViewButton $on aria-label="页面视图"><svg width="14" height="13" viewBox="0 0 14 13" fill="none" stroke="#555"><path d="M.5.5h13v12H.5zM2 3h10M2 5.500h10M2 8h10M2 10.500h10" /></svg></ViewButton>
    <ViewButton aria-label="Web 版式"><svg width="15" height="13" viewBox="0 0 15 13" fill="none" stroke="#555"><path d="M6 10.5H.5V.5h11V4M2 3h8M2 5.500h5M2 8h4" /><circle cx="10.5" cy="8.500" r="3.500" fill="#666" /><path d="M9 7l2 1-1 2" stroke="#f3f3f3" /></svg></ViewButton>
    <button aria-label="缩小"><svg width="15" height="10" viewBox="0 0 15 10" stroke="#444"><path d="M3 4.5h8" /></svg></button>
    <Zoom type="range" aria-label="显示比例" min="0" max="100" defaultValue="52" />
    <button aria-label="放大"><svg width="8" height="9" viewBox="0 0 8 9" stroke="#444"><path d="M0 4.5h8M4 .5v8" /></svg></button>
    <Percent>110%</Percent>
  </Status>
);

export default function App() {
  const vNumbers = [2, 0, ...Array.from({ length: 17 }, (_, i) => (i + 1) * 2)];
  return (
    <Desktop>
      <Global />
      <DesktopRow>
        <LeftStrip />
        <Win>
          <TitleBar />
          <RibbonBar />
          <Notice>
            <svg width="22" height="22" viewBox="0 0 22 22"><circle cx="11" cy="11" r="11" fill="#4a7ebb" /><path d="M9.7 8.500h2.800V17H9.700zM9.700 4.500h2.800V7H9.700z" fill="#fff" /></svg>
            <NoticeTitle>获取正版 OFFICE</NoticeTitle>
            <NoticeText>你的许可证并非正版，你可能是盗版软件的受害者。立即通过正版 Office 避免中断并使文件保持安全。</NoticeText>
            <NoticeButton $w={120}>获取正版 Office</NoticeButton>
            <NoticeButton $w={106}>了解详细信息</NoticeButton>
            <Push />
            <button aria-label="关闭"><X s={9} /></button>
          </Notice>
          <Body>
            <Navigation />
            <RulerCol>
              <TabStop aria-label="制表符"><svg width="7" height="7" viewBox="0 0 7 7"><path d="M1 0v6h6" fill="none" stroke="#666" strokeWidth="2" /></svg></TabStop>
              <VRuler><VUnits>{vNumbers.map((n, i) => <VUnit key={i} $cover={n === 26}><span>{n || ''}</span></VUnit>)}</VUnits></VRuler>
            </RulerCol>
            <Canvas><Ruler /><Document /></Canvas>
            <ScrollBar>
              <ScrollButton aria-label="向上滚动"><Tri up /></ScrollButton>
              <ScrollGap $n={475} /><ScrollButton aria-label="滚动块" /><ScrollGap $n={275} />
              <ScrollButton aria-label="向下滚动"><Tri /></ScrollButton>
            </ScrollBar>
          </Body>
          <StatusBar />
        </Win>
        <RightStrip />
      </DesktopRow>
      <Taskbar />
    </Desktop>
  );
}
